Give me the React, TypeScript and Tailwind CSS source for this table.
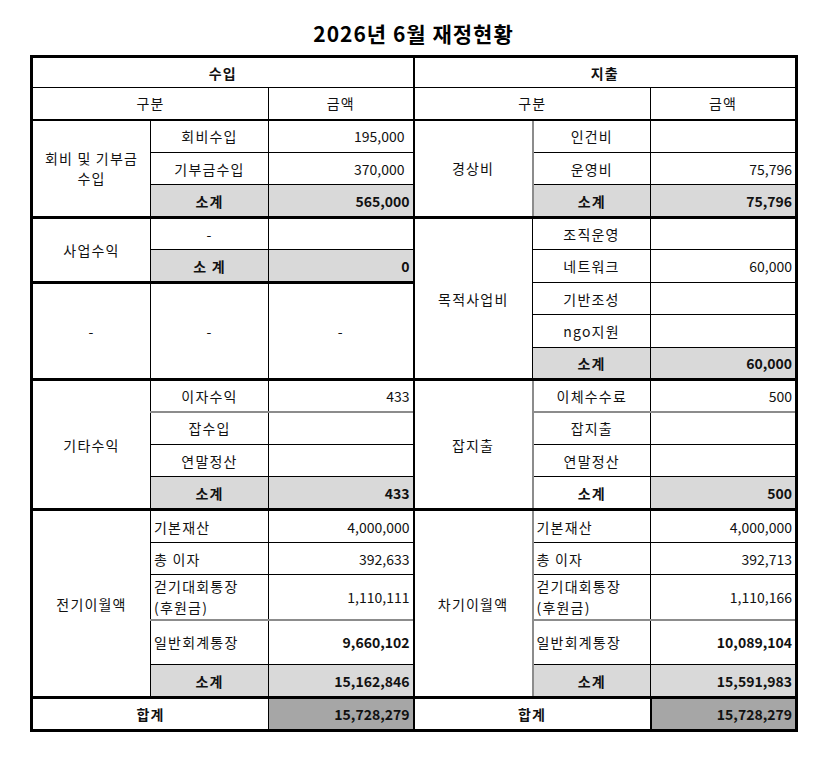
import React from 'react';

const td = "border border-black p-0 text-center align-middle text-[14px] leading-[20px] tracking-[1.2px]";
const num = "border border-black p-0 pr-[3px] text-right align-middle text-[14px] leading-[20px]";
const sub = "bg-[#d9d9d9] font-bold";
const thick = "border-t-[3px]";
const grayTop = "border-t-2 border-t-[#8c8c8c]";
const midL = "border-r-2";
const midR = "border-l-2";
const grayLeft = "border-l-2 border-l-[#8c8c8c]";

export default function App() {
    return (
        <div className="min-h-[766px] w-[834px] bg-white font-['Noto_Sans_CJK_KR','Noto_Sans',sans-serif] text-[#111]">
            <div className="ml-[30px] w-[767px] pt-[19px]">
                <h1 className="mb-[8px] h-[28px] text-center text-[21px] font-bold leading-[28px] tracking-[1px] text-black">
                    2026년 6월 재정현황
                </h1>
                <table className="w-[765px] table-fixed border-collapse border-[3px] border-black">
                    <colgroup>
                        <col className="w-[119px]" />
                        <col className="w-[118px]" />
                        <col className="w-[145px]" />
                        <col className="w-[119px]" />
                        <col className="w-[118px]" />
                        <col className="w-[146px]" />
                    </colgroup>
                    <tbody>
                        <tr className="h-[31px]">
                            <td colSpan={3} className={`${td} ${midL} font-bold`}>수입</td>
                            <td colSpan={3} className={`${td} ${midR} font-bold`}>지출</td>
                        </tr>
                        <tr className="h-[32px]">
                            <td colSpan={2} className={td}>구분</td>
                            <td className={`${td} ${midL}`}>금액</td>
                            <td colSpan={2} className={`${td} ${midR}`}>구분</td>
                            <td className={td}>금액</td>
                        </tr>

                        {/* 회비 및 기부금 / 경상비 */}
                        <tr className="h-[33px]">
                            <td rowSpan={3} className={`${td} border-t-2`}>회비 및 기부금<br />수입</td>
                            <td className={`${td} border-t-2`}>회비수입</td>
                            <td className={`${num} ${midL} border-t-2 pr-[8px]`}>195,000</td>
                            <td rowSpan={3} className={`${td} ${midR} border-t-2`}>경상비</td>
                            <td className={`${td} border-t-2 ${grayLeft}`}>인건비</td>
                            <td className={`${num} border-t-2`}></td>
                        </tr>
                        <tr className="h-[32px]">
                            <td className={td}>기부금수입</td>
                            <td className={`${num} ${midL} pr-[8px]`}>370,000</td>
                            <td className={`${td} ${grayLeft}`}>운영비</td>
                            <td className={num}>75,796</td>
                        </tr>
                        <tr className="h-[33px]">
                            <td className={`${td} ${sub}`}>소계</td>
                            <td className={`${num} ${midL} ${sub}`}>565,000</td>
                            <td className={`${td} ${sub} ${grayLeft}`}>소계</td>
                            <td className={`${num} ${sub}`}>75,796</td>
                        </tr>

                        {/* 사업수익 / 목적사업비 */}
                        <tr className="h-[32px]">
                            <td rowSpan={2} className={`${td} ${thick}`}>사업수익</td>
                            <td className={`${td} ${thick}`}>-</td>
                            <td className={`${num} ${midL} ${thick}`}></td>
                            <td rowSpan={5} className={`${td} ${midR} ${thick}`}>목적사업비</td>
                            <td className={`${td} ${thick}`}>조직운영</td>
                            <td className={`${num} ${thick}`}></td>
                        </tr>
                        <tr className="h-[33px]">
                            <td className={`${td} ${sub}`}>소 계</td>
                            <td className={`${num} ${midL} ${sub}`}>0</td>
                            <td className={td}>네트워크</td>
                            <td className={num}>60,000</td>
                        </tr>
                        <tr className="h-[32px]">
                            <td rowSpan={3} className={`${td} ${thick}`}>-</td>
                            <td rowSpan={3} className={`${td} ${thick}`}>-</td>
                            <td rowSpan={3} className={`${td} ${midL} ${thick}`}>-</td>
                            <td className={td}>기반조성</td>
                            <td className={num}></td>
                        </tr>
                        <tr className="h-[33px]">
                            <td className={td}>ngo지원</td>
                            <td className={num}></td>
                        </tr>
                        <tr className="h-[32px]">
                            <td className={`${td} ${sub}`}>소계</td>
                            <td className={`${num} ${sub}`}>60,000</td>
                        </tr>

                        {/* 기타수익 / 잡지출 */}
                        <tr className="h-[32px]">
                            <td rowSpan={4} className={`${td} ${thick}`}>기타수익</td>
                            <td className={`${td} ${thick}`}>이자수익</td>
                            <td className={`${num} ${midL} ${thick}`}>433</td>
                            <td rowSpan={4} className={`${td} ${midR} ${thick}`}>잡지출</td>
                            <td className={`${td} ${thick} ${grayLeft}`}>이체수수료</td>
                            <td className={`${num} ${thick}`}>500</td>
                        </tr>
                        <tr className="h-[33px]">
                            <td className={`${td} ${grayTop}`}>잡수입</td>
                            <td className={`${num} ${midL} ${grayTop}`}></td>
                            <td className={`${td} ${grayTop} ${grayLeft}`}>잡지출</td>
                            <td className={`${num} ${grayTop}`}></td>
                        </tr>
                        <tr className="h-[32px]">
                            <td className={td}>연말정산</td>
                            <td className={`${num} ${midL}`}></td>
                            <td className={`${td} ${grayLeft}`}>연말정산</td>
                            <td className={num}></td>
                        </tr>
                        <tr className="h-[33px]">
                            <td className={`${td} ${sub}`}>소계</td>
                            <td className={`${num} ${midL} ${sub}`}>433</td>
                            <td className={`${td} font-bold ${grayLeft}`}>소계</td>
                            <td className={`${num} ${sub}`}>500</td>
                        </tr>

                        {/* 전기이월액 / 차기이월액 */}
                        <tr className="h-[33px]">
                            <td rowSpan={5} className={`${td} ${thick}`}>전기이월액</td>
                            <td className={`${td} ${thick} pl-[3px] text-left`}>기본재산</td>
                            <td className={`${num} ${midL} ${thick}`}>4,000,000</td>
                            <td rowSpan={5} className={`${td} ${midR} ${thick}`}>차기이월액</td>
                            <td className={`${td} ${thick} pl-[3px] text-left ${grayLeft}`}>기본재산</td>
                            <td className={`${num} ${thick}`}>4,000,000</td>
                        </tr>
                        <tr className="h-[32px]">
                            <td className={`${td} pl-[3px] text-left`}>총 이자</td>
                            <td className={`${num} ${midL}`}>392,633</td>
                            <td className={`${td} pl-[3px] text-left ${grayLeft}`}>총 이자</td>
                            <td className={num}>392,713</td>
                        </tr>
                        <tr className="h-[45px]">
                            <td className={`${td} pl-[3px] text-left leading-[21px]`}>걷기대회통장<br />(후원금)</td>
                            <td className={`${num} ${midL}`}>1,110,111</td>
                            <td className={`${td} pl-[3px] text-left leading-[21px] ${grayLeft}`}>걷기대회통장<br />(후원금)</td>
                            <td className={num}>1,110,166</td>
                        </tr>
                        <tr className="h-[45px]">
                            <td className={`${td} ${grayTop} pl-[3px] text-left`}>일반회계통장</td>
                            <td className={`${num} ${midL} ${grayTop} font-bold`}>9,660,102</td>
                            <td className={`${td} ${grayTop} pl-[3px] text-left ${grayLeft}`}>일반회계통장</td>
                            <td className={`${num} ${grayTop} font-bold`}>10,089,104</td>
                        </tr>
                        <tr className="h-[33px]">
                            <td className={`${td} ${sub}`}>소계</td>
                            <td className={`${num} ${midL} ${sub}`}>15,162,846</td>
                            <td className={`${td} ${sub} ${grayLeft}`}>소계</td>
                            <td className={`${num} ${sub}`}>15,591,983</td>
                        </tr>

                        {/* 합계 */}
                        <tr className="h-[33px]">
                            <td colSpan={2} className={`${td} ${thick} font-bold`}>합계</td>
                            <td className={`${num} ${midL} ${thick} bg-[#a6a6a6] font-bold`}>15,728,279</td>
                            <td colSpan={2} className={`${td} ${midR} ${thick} font-bold`}>합계</td>
                            <td className={`${num} ${thick} border-l-2 bg-[#a6a6a6] font-bold`}>15,728,279</td>
                        </tr>
                    </tbody>
                </table>
            </div>
        </div>
    );
}
